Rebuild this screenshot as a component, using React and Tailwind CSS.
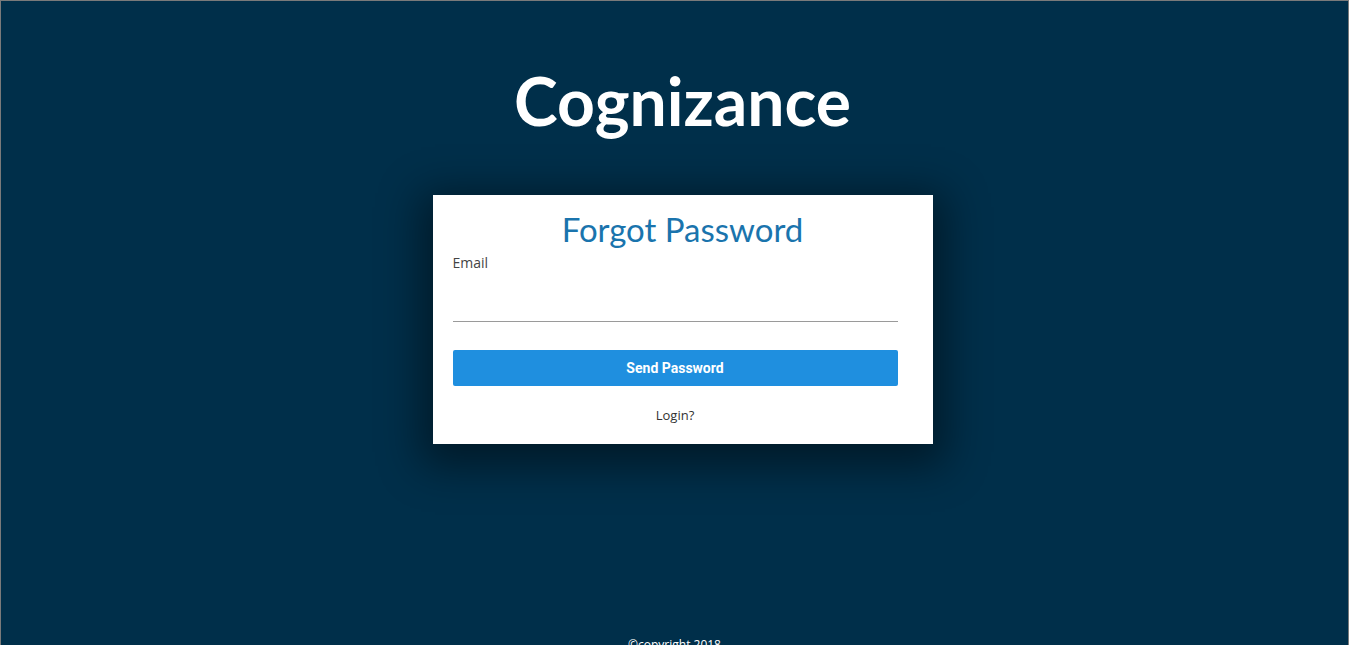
import React, { useState } from "react";

const App = () => {
  const [email, setEmail] = useState("");

  return (
    <div className="min-h-screen h-[645px] overflow-hidden bg-[#002f4a] border-t border-l border-r border-[#7a7a7a] flex flex-col items-center font-['Open_Sans',sans-serif]">
      <div className="flex flex-col items-center pl-[16px]">
        <h1 className="mt-[60px] text-[66px] leading-[80px] font-bold text-white font-['Lato',sans-serif]">
          Cognizance
        </h1>

        <div className="mt-[54px] w-[500px] bg-white pt-[12px] pb-[19px] pl-[20px] pr-[35px] shadow-[0_10px_40px_12px_rgba(0,0,0,0.45)]">
          <h2 className="text-center text-[33px] leading-[44px] text-[#1a74ad] pl-[15px] font-['Lato',sans-serif]">
            Forgot Password
          </h2>
          <label className="block mt-[3px] text-[14px] leading-[18px] text-[#444]">
            Email
          </label>
          <input
            type="email"
            value={email}
            onChange={(e) => setEmail(e.target.value)}
            className="block w-full h-[50px] border-b border-[#9a9a9a] outline-none text-[14px]"
          />
          <button className="mt-[28px] w-full h-[36px] rounded-[2px] bg-[#1f8fdf] text-white text-[14px] font-bold font-['Roboto',sans-serif]">
            Send Password
          </button>
          <div className="mt-[19px] text-center text-[13px] leading-[20px] text-[#333]">
            Login?
          </div>
        </div>
      </div>

      <div className="mt-auto mb-[-8px] text-[12px] leading-[16px] text-white">
        ©copyright 2018
      </div>
    </div>
  );
};

export default App;
